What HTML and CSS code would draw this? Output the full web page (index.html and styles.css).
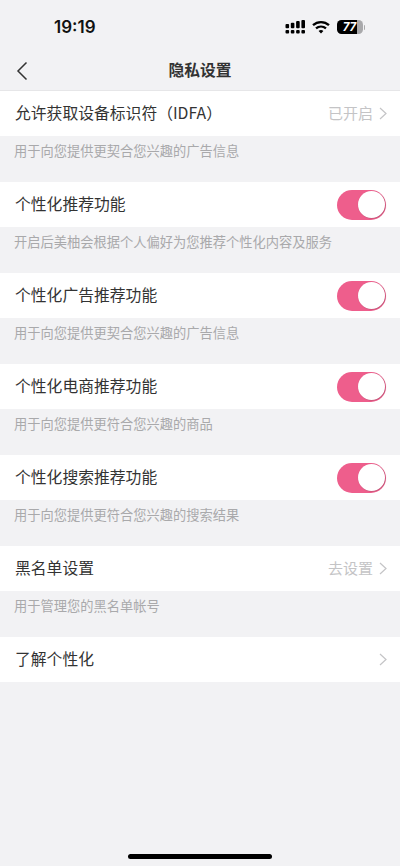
FILE: index.html
```html
<!DOCTYPE html>
<html lang="zh-CN">
<head>
<meta charset="utf-8">
<title>隐私设置</title>
<link rel="stylesheet" href="styles.css">
</head>
<body>
<div class="page">
  <div class="status">
    <span class="time">19:19</span>
    <div class="status-icons">
      <svg class="signal" width="21" height="14" viewBox="0 0 21 14"><g fill="#000"><rect x="0.500" y="4" width="3.600" height="4.300" rx="1"/><rect x="0.500" y="10" width="3.600" height="3.400" rx="1"/><rect x="5.800" y="2.700" width="3.600" height="5.600" rx="1"/><rect x="5.800" y="10" width="3.600" height="3.400" rx="1"/><rect x="11.100" y="1" width="3.600" height="7.300" rx="1"/><rect x="11.100" y="10" width="3.600" height="3.400" rx="1"/><rect x="16.400" y="0" width="3.600" height="8.300" rx="1"/><rect x="16.400" y="10" width="3.600" height="3.400" rx="1"/></g></svg>
      <svg class="wifi" width="18" height="14" viewBox="0 0 18 14"><g fill="none" stroke="#000" stroke-width="2.300"><path d="M1 5.200C5.600 1 12.400 1 17 5.200"/><path d="M4 8.400C6.900 5.900 11.100 5.900 14 8.400"/></g><path d="M6.600 11 9 13.600 11.400 11C10 9.800 8 9.800 6.600 11Z" fill="#000"/></svg>
      <div class="battery"><div class="batt-body"><span class="batt-num">77</span></div><i class="batt-cap"></i></div>
    </div>
  </div>
  <header class="nav">
    <svg class="back" width="12" height="20" viewBox="0 0 12 20"><path d="M10.500 1.500 2 10l8.500 8.500" fill="none" stroke="#333" stroke-width="1.500"/></svg>
    <h1>隐私设置</h1>
  </header>

  <div class="row"><span class="label">允许获取设备标识符（IDFA）</span><span class="value">已开启<svg class="chev" width="8" height="13" viewBox="0 0 8 13"><path d="M1 1l6 5.500-6 5.500" fill="none" stroke="#c4c4c6" stroke-width="1.200"/></svg></span></div>
  <p class="hint">用于向您提供更契合您兴趣的广告信息</p>

  <div class="row"><span class="label">个性化推荐功能</span><span class="switch"><i class="knob"></i></span></div>
  <p class="hint">开启后美柚会根据个人偏好为您推荐个性化内容及服务</p>

  <div class="row"><span class="label">个性化广告推荐功能</span><span class="switch"><i class="knob"></i></span></div>
  <p class="hint">用于向您提供更契合您兴趣的广告信息</p>

  <div class="row"><span class="label">个性化电商推荐功能</span><span class="switch"><i class="knob"></i></span></div>
  <p class="hint">用于向您提供更符合您兴趣的商品</p>

  <div class="row"><span class="label">个性化搜索推荐功能</span><span class="switch"><i class="knob"></i></span></div>
  <p class="hint">用于向您提供更符合您兴趣的搜索结果</p>

  <div class="row"><span class="label">黑名单设置</span><span class="value">去设置<svg class="chev" width="8" height="13" viewBox="0 0 8 13"><path d="M1 1l6 5.500-6 5.500" fill="none" stroke="#c4c4c6" stroke-width="1.200"/></svg></span></div>
  <p class="hint">用于管理您的黑名单帐号</p>

  <div class="row"><span class="label">了解个性化</span><span class="value"><svg class="chev" width="8" height="13" viewBox="0 0 8 13"><path d="M1 1l6 5.500-6 5.500" fill="none" stroke="#c4c4c6" stroke-width="1.200"/></svg></span></div>

  <div class="home"></div>
</div>
</body>
</html>
```
FILE: styles.css
```css
* { box-sizing: border-box; }
html, body { margin: 0; padding: 0; }
body { background: #f2f2f4; font-family: "Noto Sans CJK SC", "Noto Sans", sans-serif; }
.page { position: relative; width: 400px; height: 866px; overflow: hidden; background: #f2f2f4; }
.status { height: 48px; padding: 9px 0 0 54px; display: flex; justify-content: space-between; }
.time { font-family: Inter, "Liberation Sans", sans-serif; font-size: 17px; font-weight: 600; color: #111; line-height: 36px; height: 36px; }
.status-icons { display: flex; align-items: flex-start; gap: 6px; padding: 11px 35px 0 0; }
.signal { display: block; }
.wifi { display: block; }
.battery { display: flex; align-items: center; margin-left: 1px; }
.batt-body { width: 26px; height: 14px; border-radius: 4.500px; background: linear-gradient(90deg, #000 0, #000 77%, #a9a9ab 77%); display: flex; align-items: center; justify-content: center; }
.batt-num { font-family: Inter, "Liberation Sans", sans-serif; font-size: 11.500px; font-weight: 700; color: #fff; font-style: italic; line-height: 14px; }
.batt-cap { display: block; width: 1.500px; height: 5px; background: #aaa; border-radius: 0 2px 2px 0; margin-left: 1px; }
.nav { height: 43px; display: flex; align-items: center; justify-content: center; position: relative; border-bottom: 1px solid #e6e6e8; padding-top: 1px; }
.nav h1 { margin: 0; font-size: 15.750px; font-weight: 600; color: #333; line-height: 22px; }
.back { position: absolute; left: 16px; top: 12.500px; }
.row { height: 45px; background: #fff; display: flex; align-items: center; justify-content: space-between; padding: 0 13px 0 15px; }
.label { font-size: 15.800px; color: #333; line-height: 22px; margin-top: -1px; }
.value { display: flex; align-items: center; gap: 6px; font-size: 15px; color: #c4c4c6; line-height: 20px; margin-top: -1px; }
.chev { display: block; margin-top: 1px; }
.hint { margin: 0; height: 46px; padding: 5px 14px 0; font-size: 13.250px; line-height: 20px; color: #a9a9ab; }
.switch { display: block; width: 49px; height: 30px; margin-right: 1px; border-radius: 15px; background: #ee5e8c; position: relative; }
.knob { position: absolute; right: 1.500px; top: 1.500px; width: 27px; height: 27px; border-radius: 50%; background: #fff; box-shadow: 0.500px 0.500px 1px rgba(120, 60, 80, 0.500); }
.home { position: absolute; left: 128px; bottom: 7px; width: 144px; height: 5px; border-radius: 3px; background: #000; }
```
